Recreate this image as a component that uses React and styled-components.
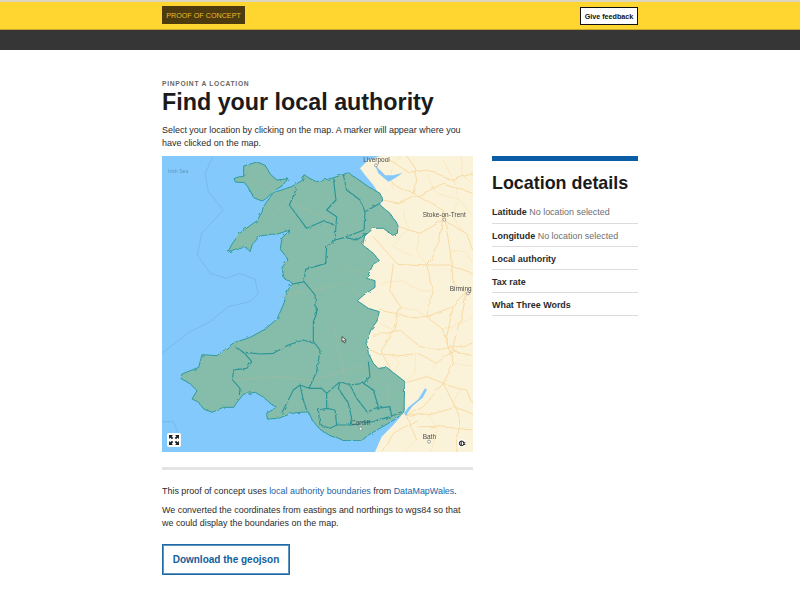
import React from "react";
import styled, { createGlobalStyle } from "styled-components";

const GlobalStyle = createGlobalStyle`
  html, body {
    margin: 0;
    padding: 0;
    background: #fff;
    font-family: "Liberation Sans", Arial, sans-serif;
  }
`;

// all map coordinates are in a 3x grid of the map picture
const SEA = "6,18 660,18 625,30 600,55 615,75 640,105 668,150 500,500 730,790 700,825 665,860 645,906 6,906";

const WALES = `M310,170 L340,128 L395,110 L426,92 L432,74 L450,86 L470,95 L515,85 L565,68 L590,85 L625,110 L660,130 L668,150
  L660,165 L690,190 L714,225 L712,250 L698,256 L670,235 L640,235 L614,258 L608,285 L640,310 L658,332 L640,342 L620,385 L645,392 L645,412
  L610,436 L592,452 L625,475 L658,485 L650,515 L635,535 L620,570 L625,610 L640,640 L655,655 L680,652 L735,695 L733,745 L732,785
  L710,805 L665,832 L625,855 L605,872 L555,872 L510,857 L480,838 L458,812 L445,785 L420,787 L395,790 L355,805 L322,807 L320,790 L350,772
  L331,760 L311,742 L286,727 L251,732 L231,757 L221,772 L190,772 L156,787 L131,777 L116,757 L96,747 L111,722 L91,702 L61,684 L66,672 L116,652
  L126,614 L171,617 L216,582 L226,577 L271,562 L316,537 L351,507 L371,462 L384,420 L398,400 L372,385 L366,352 L384,330 L361,296 L366,264
  L390,240 L346,254 L338,252 L300,258 L277,283 L270,306 L260,293 L231,296 L204,306 L216,282 L241,248 L291,212 L306,186 Z`;

const ANGLESEY = `M251,48 L291,36 L316,46 L331,73 L351,90 L384,86 L366,108 L341,123 L316,148 L306,153 L281,143 L268,118 L254,98
  L226,96 L222,86 L238,80 L251,80 Z`;

const BOUNDARIES = [
  "410,115 388,165 440,235 490,213 528,225 525,270 500,290 497,340 437,358 432,395 385,405",
  "432,395 465,435 470,490 460,515 460,575 480,600 470,665 447,715",
  "520,85 528,150 500,180 530,200 528,225",
  "550,75 560,120 600,150 615,185 612,240 555,262 525,270",
  "660,160 615,185",
  "555,262 590,270 620,250",
  "225,590 255,610 275,635 260,655 220,660 218,690 240,715 238,735",
  "255,607 300,612 340,610 385,585 430,570 460,580",
  "447,715 420,705 400,720 380,760 365,790",
  "420,705 430,750 440,780",
  "447,715 485,715 500,730 540,695 570,705 610,700 630,680 625,635",
  "500,730 500,775 475,780 480,825 510,835 530,825 525,780 500,775",
  "540,695 535,715 565,760 575,805 570,825",
  "570,705 590,745 625,790",
  "610,700 640,720 655,770 625,785",
  "650,775 690,770 695,800",
  "530,825 575,825 640,815 690,800 725,785",
];

const ROADS = [
  "660,60 710,110 760,130 850,180 870,300 880,400 920,430",
  "690,30 750,70 800,60 880,90 938,70",
  "668,150 720,160 790,130 850,100 938,130",
  "715,230 780,250 850,210 920,250 938,300",
  "640,260 710,340 800,345 870,345 938,370",
  "700,340 690,420 720,470 700,540 660,600 700,670",
  "800,345 820,420 800,500 850,540 870,600",
  "660,480 740,500 800,500 880,470 920,430",
  "640,560 720,540 780,590 850,600 938,580",
  "630,600 700,620 770,610 830,640 880,600 938,620",
  "880,470 860,560 880,640 850,700 790,770 740,800 770,870",
  "920,430 900,520 880,600",
  "730,700 800,680 850,700 920,720 938,760",
  "740,800 810,790 880,770 938,790",
  "770,810 700,850 670,906",
  "770,830 840,830 938,840",
  "850,700 900,800 890,906",
  "800,345 840,270 850,180",
  "760,130 770,60 740,18",
];

const MINOR_ROADS = [
  "700,120 690,60 720,18",
  "730,180 745,240 700,290 760,320",
  "800,70 830,130 900,150 938,200",
  "850,30 880,90 900,150 880,200 910,250",
  "900,18 910,80 938,100",
  "780,250 770,300 800,345",
  "870,300 920,310 938,340",
  "660,400 720,390 780,420 820,420",
  "720,470 770,480 800,500",
  "660,520 700,540",
  "770,610 760,670 730,700",
  "830,640 800,680",
  "880,640 938,650",
  "680,700 720,640 700,620",
  "850,540 900,520 938,500",
  "800,790 830,830 810,906",
  "880,770 900,720",
  "770,870 730,906",
];

const WALES_ROADS = [
  "260,85 320,105 341,123",
  "360,440 560,400 600,440",
  "220,690 340,680 450,690 600,650 660,690",
  "400,160 460,190 520,210",
  "540,340 600,370 640,340",
  "330,200 410,130",
  "520,520 545,640 560,700",
  "680,700 690,760",
];

const SEA_LINES = [
  "160,18 135,70 145,125 190,180 125,250 112,315 150,370 200,385 240,370 285,388 295,430 270,455 205,470 150,515 90,545 6,610",
  "6,815 40,815 55,850",
];

const LABELS = [
  { x: 24, y: 69, text: "Irish Sea", size: 15.5, fill: "#5d97bd" },
  { x: 610, y: 37, text: "Liverpool", size: 19.5, fill: "#4a4a4a" },
  { x: 788, y: 200, text: "Stoke-on-Trent", size: 19.5, fill: "#4a4a4a" },
  { x: 869, y: 422, text: "Birming", size: 19.5, fill: "#4a4a4a" },
  { x: 573, y: 826, text: "Cardiff", size: 19.5, fill: "#3f5a62" },
  { x: 788, y: 866, text: "Bath", size: 19.5, fill: "#4a4a4a" },
];

const TOWNS = [[648, 46], [853, 209], [924, 430], [602, 836], [807, 875]];

function FullscreenIcon() {
  return (
    <svg width="12" height="12" viewBox="0 0 12 12">
      <path d="M1,1 h4 l-1.3,1.3 l1.6,1.6 l-1.4,1.4 l-1.6,-1.6 l-1.3,1.3 z" fill="#222" />
      <path d="M11,1 h-4 l1.3,1.3 l-1.6,1.6 l1.4,1.4 l1.6,-1.6 l1.3,1.3 z" fill="#222" />
      <path d="M1,11 h4 l-1.3,-1.3 l1.6,-1.6 l-1.4,-1.4 l-1.6,1.6 l-1.3,-1.3 z" fill="#222" />
      <path d="M11,11 h-4 l1.3,-1.3 l-1.6,-1.6 l1.4,-1.4 l1.6,1.6 l1.3,-1.3 z" fill="#222" />
    </svg>
  );
}

function WalesMap() {
  return (
    <MapSvg viewBox="6 18 933 888" preserveAspectRatio="none">
      <defs>
        <filter id="rough" x="0" y="0" width="100%" height="100%">
          <feTurbulence type="fractalNoise" baseFrequency="0.07" numOctaves="2" seed="4" />
          <feDisplacementMap in="SourceGraphic" scale="9" />
        </filter>
        <filter id="wiggle" x="0" y="0" width="100%" height="100%">
          <feTurbulence type="fractalNoise" baseFrequency="0.025" numOctaves="2" seed="9" />
          <feDisplacementMap in="SourceGraphic" scale="16" />
        </filter>
      </defs>
      <rect x="6" y="18" width="933" height="888" fill="#fbf3d9" />
      <g filter="url(#wiggle)">
        {MINOR_ROADS.map((d) => (
          <polyline key={d} points={d} fill="none" stroke="#fae6bf" strokeWidth="2.5" />
        ))}
        {ROADS.map((d) => (
          <polyline key={d} points={d} fill="none" stroke="#f8daa4" strokeWidth="3" />
        ))}
      </g>
      <polygon points={SEA} fill="#84c9fb" />
      <polygon points="645,45 655,70 685,95 705,85 728,68 700,76 675,76" fill="#84c9fb" />
      <polygon points="732,790 745,772 775,748 795,715 801,719 788,743 758,768 743,788 738,798" fill="#84c9fb" />
      {SEA_LINES.map((d) => (
        <polyline key={d} points={d} fill="none" stroke="#6fb4dc" strokeWidth="2" />
      ))}
      <g filter="url(#rough)">
        <path d={WALES} fill="#86bcaa" stroke="#2f9a9c" strokeWidth="3" strokeLinejoin="round" />
        <path d={ANGLESEY} fill="#86bcaa" stroke="#2f9a9c" strokeWidth="3" strokeLinejoin="round" />
        {WALES_ROADS.map((d) => (
          <polyline key={d} points={d} fill="none" stroke="#a0bd9e" strokeWidth="2" />
        ))}
        {BOUNDARIES.map((d) => (
          <polyline key={d} points={d} fill="none" stroke="#2b9496" strokeWidth="3.4" strokeLinejoin="round" />
        ))}
      </g>
      {TOWNS.map(([x, y]) => (
        <circle key={x} cx={x} cy={y} r="4.5" fill="#fff" stroke="#777" strokeWidth="2" />
      ))}
      {LABELS.map((l) => (
        <MapLabel key={l.text} x={l.x} y={l.y} fontSize={l.size} fill={l.fill}>
          {l.text}
        </MapLabel>
      ))}
      <path d="M546,560 L546,575 L550,572 L553,579 L557,577 L554,571 L559,570 Z" fill="#eee" stroke="#222" strokeWidth="2" />
      <circle cx="905" cy="880" r="12" fill="#fff" />
      <circle cx="905" cy="880" r="7" fill="none" stroke="#111" strokeWidth="3" />
      <rect x="902" y="874" width="3" height="12" fill="#111" />
      <rect x="909" y="877" width="7" height="2.5" fill="#111" />
      <rect x="909" y="882" width="7" height="2.5" fill="#111" />
    </MapSvg>
  );
}

export default function App() {
  return (
    <>
      <GlobalStyle />
      <TopStrip />
      <Banner>
        <BannerInner>
          <Badge>Proof of concept</Badge>
          <FeedbackButton>Give feedback</FeedbackButton>
        </BannerInner>
      </Banner>
      <NavBar />
      <Page>
        <Caption>Pinpoint a location</Caption>
        <Title>Find your local authority</Title>
        <Columns>
          <MainColumn>
            <Intro>
              Select your location by clicking on the map. A marker will appear
              where you have clicked on the map.
            </Intro>
            <MapFrame>
              <WalesMap />
              <FullscreenButton>
                <FullscreenIcon />
              </FullscreenButton>
            </MapFrame>
            <Divider />
            <Body>
              This proof of concept uses <Link>local authority boundaries</Link>{" "}
              from <Link>DataMapWales</Link>.
            </Body>
            <Body>
              We converted the coordinates from eastings and northings to wgs84
              so that we could display the boundaries on the map.
            </Body>
            <DownloadButton>Download the geojson</DownloadButton>
          </MainColumn>
          <Sidebar>
            <SidebarTitle>Location details</SidebarTitle>
            <DetailRow>
              <DetailKey>Latitude</DetailKey> <DetailValue>No location selected</DetailValue>
            </DetailRow>
            <DetailRow>
              <DetailKey>Longitude</DetailKey> <DetailValue>No location selected</DetailValue>
            </DetailRow>
            <DetailRow>
              <DetailKey>Local authority</DetailKey>
            </DetailRow>
            <DetailRow>
              <DetailKey>Tax rate</DetailKey>
            </DetailRow>
            <DetailRow>
              <DetailKey>What Three Words</DetailKey>
            </DetailRow>
          </Sidebar>
        </Columns>
      </Page>
    </>
  );
}

const TopStrip = styled.div`
  height: 2px;
  background: #dcd6c0;
`;

const Banner = styled.div`
  height: 27px;
  background: #ffd530;
  border-bottom: 1px solid #c9a52a;
`;

const BannerInner = styled.div`
  width: 476px;
  margin: 0 auto;
  display: flex;
  justify-content: space-between;
  align-items: flex-start;
`;

const Badge = styled.div`
  margin-top: 4px;
  width: 83px;
  height: 18px;
  box-sizing: border-box;
  display: flex;
  align-items: center;
  justify-content: center;
  background: #4d3a0e;
  color: #e9bb2c;
  font-size: 7.2px;
  text-transform: uppercase;
  white-space: nowrap;
`;

const FeedbackButton = styled.div`
  margin-top: 5px;
  width: 58px;
  height: 18px;
  box-sizing: border-box;
  display: flex;
  align-items: center;
  justify-content: center;
  background: #fff;
  border: 1px solid #111;
  color: #111;
  font-size: 7.2px;
  font-weight: bold;
  white-space: nowrap;
`;

const NavBar = styled.div`
  height: 20px;
  background: #363636;
`;

const Page = styled.main`
  width: 476px;
  margin: 0 auto;
  padding-top: 29px;
`;

const Caption = styled.div`
  font-size: 6.7px;
  line-height: 9px;
  font-weight: bold;
  letter-spacing: 0.7px;
  text-transform: uppercase;
  color: #666;
`;

const Title = styled.h1`
  margin: 0;
  font-size: 23.3px;
  line-height: 29px;
  font-weight: bold;
  color: #1b1b1b;
`;

const Columns = styled.div`
  display: flex;
  gap: 19px;
  margin-top: 7px;
`;

const MainColumn = styled.div`
  width: 311px;
`;

const Intro = styled.p`
  margin: 0 0 6px;
  max-width: 305px;
  font-size: 8.96px;
  line-height: 13px;
  color: #2b2b2b;
`;

const MapFrame = styled.div`
  position: relative;
  height: 296px;
`;

const MapSvg = styled.svg`
  display: block;
  width: 311px;
  height: 296px;
  filter: blur(0.35px);
`;

const MapLabel = styled.text`
  font-family: "Liberation Sans", Arial, sans-serif;
`;

const FullscreenButton = styled.div`
  position: absolute;
  left: 5px;
  bottom: 5px;
  width: 14px;
  height: 14px;
  display: flex;
  align-items: center;
  justify-content: center;
  background: #fff;
  border-radius: 2px;
`;

const Divider = styled.div`
  height: 3px;
  margin: 15px 0 15px;
  background: #e4e4e4;
`;

const Body = styled.p`
  margin: 0 0 6px;
  max-width: 305px;
  font-size: 8.93px;
  line-height: 13px;
  color: #2b2b2b;
`;

const Link = styled.span`
  color: #1a65a6;
`;

const DownloadButton = styled.div`
  width: 128px;
  height: 31px;
  margin-top: 14px;
  box-sizing: border-box;
  display: flex;
  align-items: center;
  justify-content: center;
  background: #fff;
  border: 1px solid #1f69a6;
  box-shadow: inset 0 0 0 1px #5c93bf;
  color: #145e9b;
  font-size: 10px;
  font-weight: bold;
  white-space: nowrap;
`;

const Sidebar = styled.aside`
  width: 146px;
  margin-top: 32px;
  border-top: 5px solid #0b5ea6;
`;

const SidebarTitle = styled.h2`
  margin: 11px 0 6.4px;
  font-size: 17.9px;
  line-height: 22px;
  font-weight: bold;
  color: #1b1b1b;
`;

const DetailRow = styled.div`
  height: 23.2px;
  box-sizing: border-box;
  padding-top: 6px;
  border-bottom: 1px solid #dcdcdc;
  font-size: 8.95px;
  line-height: 12px;
  white-space: nowrap;
`;

const DetailKey = styled.span`
  font-weight: bold;
  color: #2a2a2a;
`;

const DetailValue = styled.span`
  color: #6f6f6f;
`;
